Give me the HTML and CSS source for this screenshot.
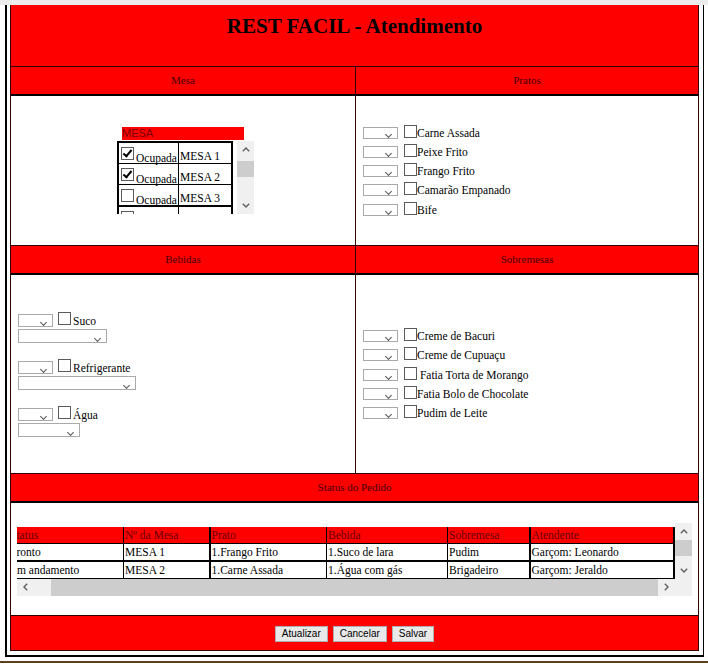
FILE: index.html
```html
<!DOCTYPE html>
<html lang="pt-BR">
<head>
    <meta charset="UTF-8">
    <title>REST FACIL - Atendimento</title>
    <link rel="stylesheet" href="styles.css">
</head>
<body>
    <div class="topbar"></div>
    <div class="frame">
        <div class="main">
            <div class="title">REST FACIL - Atendimento</div>

            <div class="head left">Mesa</div>
            <div class="head">Pratos</div>

            <div class="cell cell-top left mesa-cell">
                <div class="mesa">
                    <div class="mesa-bar">MESA</div>
                    <div class="mesa-list">
                        <div class="mesa-view">
                            <table class="mesa-table">
                                <tr><td class="occ"><input type="checkbox" checked>Ocupada</td><td class="num">MESA 1</td></tr>
                                <tr><td class="occ"><input type="checkbox" checked>Ocupada</td><td class="num">MESA 2</td></tr>
                                <tr class="sep"><td class="occ"><input type="checkbox">Ocupada</td><td class="num">MESA 3</td></tr>
                                <tr><td class="occ"><input type="checkbox">Ocupada</td><td class="num">MESA 4</td></tr>
                            </table>
                        </div>
                        <div class="vbar">
                            <div class="sb-btn"><svg width="8" height="5" viewBox="0 0 8 5"><path d="M0.8 4.2L4 1l3.2 3.2" fill="none" stroke="#606060" stroke-width="1.4"/></svg></div>
                            <div class="track mesa-track"><div class="thumb"></div></div>
                            <div class="sb-btn"><svg width="8" height="5" viewBox="0 0 8 5"><path d="M0.8 0.8L4 4l3.2-3.2" fill="none" stroke="#606060" stroke-width="1.4"/></svg></div>
                        </div>
                    </div>
                </div>
            </div>
            <div class="cell cell-top">
                <div class="items">
                    <div class="item"><span class="dd"><select></select></span><input type="checkbox"><label>Carne Assada</label></div>
                    <div class="item"><span class="dd"><select></select></span><input type="checkbox"><label>Peixe Frito</label></div>
                    <div class="item"><span class="dd"><select></select></span><input type="checkbox"><label>Frango Frito</label></div>
                    <div class="item"><span class="dd"><select></select></span><input type="checkbox"><label>Camarão Empanado</label></div>
                    <div class="item"><span class="dd"><select></select></span><input type="checkbox"><label>Bife</label></div>
                </div>
            </div>

            <div class="head left">Bebidas</div>
            <div class="head">Sobremesas</div>

            <div class="cell cell-mid left">
                <div class="drinks">
                    <div class="drink">
                        <div class="line"><span class="dd"><select></select></span><input type="checkbox"><label>Suco</label></div>
                        <span class="dd dd-suco"><select></select></span>
                    </div>
                    <div class="drink">
                        <div class="line"><span class="dd"><select></select></span><input type="checkbox"><label>Refrigerante</label></div>
                        <span class="dd dd-refri"><select></select></span>
                    </div>
                    <div class="drink">
                        <div class="line"><span class="dd"><select></select></span><input type="checkbox"><label>Água</label></div>
                        <span class="dd dd-agua"><select></select></span>
                    </div>
                </div>
            </div>
            <div class="cell cell-mid">
                <div class="items">
                    <div class="item"><span class="dd"><select></select></span><input type="checkbox"><label>Creme de Bacuri</label></div>
                    <div class="item"><span class="dd"><select></select></span><input type="checkbox"><label>Creme de Cupuaçu</label></div>
                    <div class="item"><span class="dd"><select></select></span><input type="checkbox"><label>&nbsp;Fatia Torta de Morango</label></div>
                    <div class="item"><span class="dd"><select></select></span><input type="checkbox"><label>Fatia Bolo de Chocolate</label></div>
                    <div class="item"><span class="dd"><select></select></span><input type="checkbox"><label>Pudim de Leite</label></div>
                </div>
            </div>

            <div class="head full">Status do Pedido</div>

            <div class="cell cell-status full">
                <div class="orders">
                    <div class="orders-view" id="ordersView">
                        <table class="orders-table">
                            <colgroup>
                                <col class="c-status">
                                <col class="c-mesa">
                                <col class="c-prato">
                                <col class="c-bebida">
                                <col class="c-sobre">
                                <col class="c-atend">
                            </colgroup>
                            <tr>
                                <th>Status</th><th>Nº da Mesa</th><th>Prato</th><th>Bebida</th><th>Sobremesa</th><th>Atendente</th>
                            </tr>
                            <tr class="r1">
                                <td>Pronto</td><td>MESA 1</td><td>1.Frango Frito</td><td>1.Suco de lara</td><td>Pudim</td><td>Garçom: Leonardo</td>
                            </tr>
                            <tr>
                                <td>Em andamento</td><td>MESA 2</td><td>1.Carne Assada</td><td>1.Água com gás</td><td>Brigadeiro</td><td>Garçom: Jeraldo</td>
                            </tr>
                            <tr>
                                <td></td><td></td><td></td><td></td><td></td><td></td>
                            </tr>
                        </table>
                    </div>
                    <div class="vbar">
                        <div class="sb-btn"><svg width="8" height="5" viewBox="0 0 8 5"><path d="M0.8 4.2L4 1l3.2 3.2" fill="none" stroke="#606060" stroke-width="1.4"/></svg></div>
                        <div class="track"><div class="thumb"></div></div>
                        <div class="sb-btn"><svg width="8" height="5" viewBox="0 0 8 5"><path d="M0.8 0.8L4 4l3.2-3.2" fill="none" stroke="#606060" stroke-width="1.4"/></svg></div>
                    </div>
                    <div class="hbar">
                        <div class="sb-btn"><svg width="5" height="8" viewBox="0 0 5 8"><path d="M4.2 0.8L1 4l3.2 3.2" fill="none" stroke="#606060" stroke-width="1.4"/></svg></div>
                        <div class="track h-track"><div class="thumb"></div></div>
                        <div class="sb-btn"><svg width="5" height="8" viewBox="0 0 5 8"><path d="M0.8 0.8L4 4 0.8 7.2" fill="none" stroke="#606060" stroke-width="1.4"/></svg></div>
                    </div>
                    <div class="corner"></div>
                </div>
            </div>

            <div class="actions">
                <button class="btn">Atualizar</button>
                <button class="btn">Cancelar</button>
                <button class="btn">Salvar</button>
            </div>
        </div>
    </div>
    <div class="taskbar"></div>

    <script>
        var ordersView = document.getElementById("ordersView");
        ordersView.scrollLeft = ordersView.scrollWidth;
    </script>
</body>
</html>
```

FILE: styles.css
```css
html, body {
    margin: 0;
    height: 664px;
    overflow: hidden;
}
body {
    background: #fff;
    font-family: "Liberation Serif", serif;
    font-size: 11.5px;
    color: #000;
}
.topbar {
    height: 5px;
    background: #ececec;
}
.frame {
    width: 699px;
    margin-left: 5px;
    box-sizing: border-box;
    border-left: 2px solid #000;
    border-right: 1px solid #000;
    border-bottom: 2px solid #000;
    padding: 0 4px 4px 3px;
}
.main {
    display: grid;
    grid-template-columns: 345px 342px;
    border: 1px solid #300;
    border-top: 0;
}
.title {
    grid-column: 1 / -1;
    height: 62px;
    box-sizing: border-box;
    padding-top: 9px;
    background: #f00;
    text-align: center;
    font-size: 21px;
    font-weight: bold;
    line-height: 24px;
    border-bottom: 1px solid #300;
}
.head {
    height: 29px;
    box-sizing: border-box;
    background: #f00;
    color: #400;
    text-align: center;
    font-size: 11px;
    line-height: 27px;
    border-bottom: 2px solid #000;
}
.left {
    border-right: 1px solid #300;
}
.full {
    grid-column: 1 / -1;
}
.cell {
    display: flex;
    align-items: center;
    box-sizing: border-box;
    background: #fff;
    border-bottom: 1px solid #300;
    padding-left: 7px;
}
.cell-top { height: 150px; }
.cell-mid { height: 199px; }
.cell-status {
    height: 113px;
    padding-left: 0;
    justify-content: center;
}

/* barras de rolagem desenhadas */
.vbar {
    display: flex;
    flex-direction: column;
    width: 17px;
    background: #f0f0f0;
}
.hbar {
    display: flex;
    height: 17px;
    background: #f0f0f0;
}
.sb-btn {
    flex: 0 0 17px;
    height: 17px;
    display: flex;
    align-items: center;
    justify-content: center;
}
.hbar .sb-btn {
    width: 17px;
}
.track {
    flex: 1;
    display: flex;
    flex-direction: column;
}
.vbar .thumb {
    height: 16px;
    background: #cdcdcd;
}
.mesa-track {
    padding-top: 3px;
}
.h-track {
    flex-direction: row;
    padding-left: 17px;
}
.h-track .thumb {
    flex: 1;
    background: #cdcdcd;
}
.corner {
    background: #f0f0f0;
}

/* form */
input[type="checkbox"] {
    -webkit-appearance: none;
    appearance: none;
    position: relative;
    width: 13px;
    height: 13px;
    margin: 0;
    box-sizing: border-box;
    border: 1px solid #5a5a5a;
    background: #fff;
    flex-shrink: 0;
}
input[type="checkbox"]:checked::after {
    content: "";
    position: absolute;
    left: 3px;
    top: 0;
    width: 3px;
    height: 7px;
    border: solid #000;
    border-width: 0 2px 2px 0;
    transform: rotate(40deg);
}
.dd {
    position: relative;
    display: inline-block;
    width: 35px;
    height: 12px;
    flex-shrink: 0;
}
.dd select {
    -webkit-appearance: none;
    appearance: none;
    display: block;
    width: 100%;
    height: 100%;
    margin: 0;
    padding: 0;
    box-sizing: border-box;
    border: 1px solid #aaa;
    background: #fff;
}
.dd::after {
    content: "";
    position: absolute;
    right: 7px;
    bottom: 2px;
    width: 4px;
    height: 4px;
    border: solid #555;
    border-width: 0 1.5px 1.5px 0;
    transform: rotate(45deg);
    pointer-events: none;
}

/* mesa */
.mesa-cell {
    justify-content: center;
    padding-left: 5px;
}
.mesa {
    width: 137px;
}
.mesa-bar {
    width: 122px;
    height: 13px;
    margin: 0 0 1px 5px;
    background: #f00;
    color: #700;
    font-family: "Liberation Sans", sans-serif;
    font-size: 11px;
    line-height: 13px;
}
.mesa-list {
    display: grid;
    grid-template-columns: 120px 17px;
    height: 73px;
}
.mesa-view {
    overflow: hidden;
}
.mesa-table {
    width: 116px;
    border-collapse: collapse;
    border: 2px solid #000;
}
.mesa-table td {
    height: 20px;
    padding: 0;
    border: 1px solid #000;
    vertical-align: bottom;
    white-space: nowrap;
}
.mesa-table tr.sep td {
    border-bottom-width: 2px;
}
.occ {
    width: 57px;
    padding-left: 2px !important;
    line-height: 10px;
}
.occ input {
    vertical-align: 2px;
    margin-right: 2px;
}
.num {
    padding-left: 1px !important;
    line-height: 13px;
}

/* pratos e sobremesas */
.items {
    display: flex;
    flex-direction: column;
    gap: 4.25px;
}
.item {
    display: flex;
    align-items: flex-start;
    height: 15px;
}
.item .dd {
    margin-top: 2px;
}
.item input {
    margin-left: 6px;
}
.item label {
    margin-top: 2px;
    line-height: 13px;
    white-space: nowrap;
}

/* bebidas */
.drinks {
    display: flex;
    flex-direction: column;
    gap: 16px;
}
.drink .line {
    display: flex;
    align-items: flex-start;
    height: 17px;
}
.drink .line .dd {
    height: 13px;
    margin-top: 2px;
}
.drink .line input {
    margin-left: 5px;
}
.drink .line label {
    margin: 3px 0 0 2px;
    line-height: 13px;
}
.drink > .dd {
    display: block;
    height: 14px;
}
.dd-suco { width: 89px; }
.dd-refri { width: 118px; }
.dd-agua { width: 62px; }

/* status do pedido */
.orders {
    display: grid;
    grid-template-columns: 658px 17px;
    grid-template-rows: 56px 17px;
    width: 675px;
    height: 73px;
}
.orders-view {
    overflow: hidden;
    padding-top: 4px;
    box-sizing: border-box;
}
.orders-table {
    width: 665px;
    table-layout: fixed;
    border-collapse: collapse;
    border-right: 2px solid #000;
}
.c-status { width: 115px; }
.c-mesa { width: 86px; }
.c-prato { width: 117px; }
.c-bebida { width: 121px; }
.c-sobre { width: 82px; }
.c-atend { width: 144px; }
.orders-table th,
.orders-table td {
    height: 16px;
    padding: 0 1px;
    border: 1px solid #000;
    line-height: 16px;
    text-align: left;
    font-weight: normal;
    white-space: nowrap;
    overflow: hidden;
}
.orders-table th {
    background: #f00;
    color: #600;
    border-top: 0;
}
.orders-table th:nth-child(3), .orders-table td:nth-child(3),
.orders-table th:nth-child(6), .orders-table td:nth-child(6) {
    border-left-width: 2px;
}
.orders-table tr.r1 td {
    border-bottom-width: 2px;
}

/* botoes */
.actions {
    grid-column: 1 / -1;
    height: 34px;
    box-sizing: border-box;
    padding-top: 10px;
    background: #f00;
    display: flex;
    justify-content: center;
    align-items: flex-start;
    gap: 5px;
}
.btn {
    height: 16px;
    padding: 0 6px;
    margin: 0;
    font-family: "Liberation Sans", sans-serif;
    font-size: 10px;
    line-height: 14px;
    color: #000;
    background: #e9e9e9;
    border: 1px solid #adadad;
    border-radius: 0;
}

.taskbar {
    height: 2px;
    margin-top: 4px;
    background: #5c4218;
}
```
